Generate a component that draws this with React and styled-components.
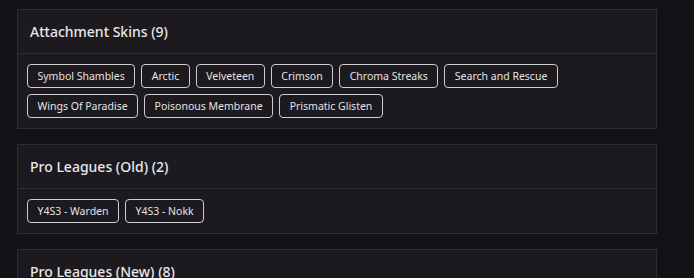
import React from 'react';
import styled, { createGlobalStyle } from 'styled-components';

const GlobalStyle = createGlobalStyle`
  html, body {
    margin: 0;
    padding: 0;
    background: #141216;
  }
  body {
    font-family: 'Noto Sans', 'Open Sans', sans-serif;
    color: #e4e3e6;
  }
`;

const groups = [
  {
    title: 'Attachment Skins',
    items: [
      'Symbol Shambles',
      'Arctic',
      'Velveteen',
      'Crimson',
      'Chroma Streaks',
      'Search and Rescue',
      'Wings Of Paradise',
      'Poisonous Membrane',
      'Prismatic Glisten',
    ],
  },
  {
    title: 'Pro Leagues (Old)',
    items: ['Y4S3 - Warden', 'Y4S3 - Nokk'],
  },
  {
    title: 'Pro Leagues (New)',
    count: 8,
    items: [],
  },
];

const App = () => {
  return (
    <>
      <GlobalStyle />
      <Page>
        {groups.map((group) => (
          <Card key={group.title}>
            <CardHeader>
              <Title>
                {group.title} ({group.count ?? group.items.length})
              </Title>
            </CardHeader>
            {group.items.length > 0 && (
              <ChipList>
                {group.items.map((item) => (
                  <Chip key={item}>{item}</Chip>
                ))}
              </ChipList>
            )}
          </Card>
        ))}
      </Page>
    </>
  );
};

export default App;

const Page = styled.div`
  display: flex;
  flex-direction: column;
  gap: 15px;
  padding: 9px 37px 0 17px;
  height: 278px;
  box-sizing: border-box;
  overflow: hidden;
`;

const Card = styled.section`
  background: #1c1a1e;
  border: 1px solid #2f2d31;
  flex-shrink: 0;
`;

const CardHeader = styled.div`
  height: 43px;
  display: flex;
  align-items: center;
  padding: 0 12px;
  border-bottom: 1px solid #2f2d31;
`;

const Title = styled.h3`
  margin: 0;
  font-size: 14px;
  font-weight: 500;
  color: #e8e7ea;
`;

const ChipList = styled.div`
  display: flex;
  flex-wrap: wrap;
  gap: 6px;
  padding: 10px 9px 10px;
`;

const Chip = styled.button`
  height: 24px;
  padding: 0 9.5px;
  background: transparent;
  border: 1px solid #cfcdd1;
  border-radius: 4px;
  color: #e4e3e6;
  font-family: inherit;
  font-size: 10.5px;
  cursor: pointer;
  :hover {
    background: #262428;
  }
`;
